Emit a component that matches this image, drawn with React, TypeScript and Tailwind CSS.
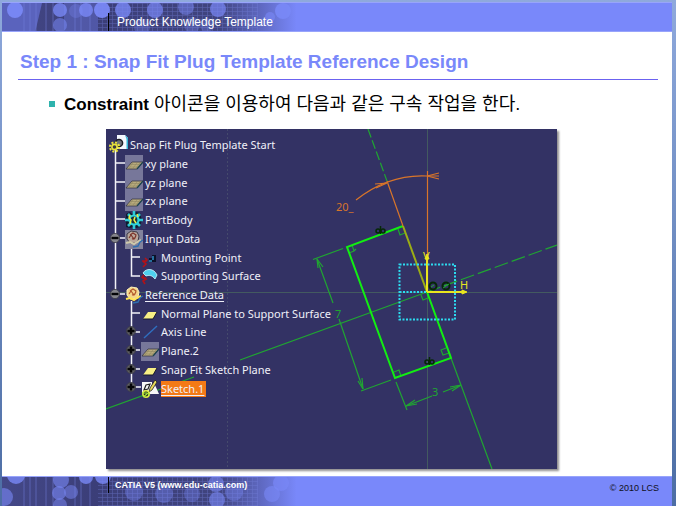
import React from "react";

type IconName =
  | "part"
  | "planeHidden"
  | "body"
  | "setHidden"
  | "point"
  | "surface"
  | "set"
  | "plane"
  | "line"
  | "sketch";

interface TreeNode {
  label: string;
  icon: IconName;
  level: 0 | 1 | 2;
  underlined?: boolean;
  selected?: boolean;
}

const nodes: TreeNode[] = [
  { label: "Snap Fit Plug Template Start", icon: "part", level: 0 },
  { label: "xy plane", icon: "planeHidden", level: 1 },
  { label: "yz plane", icon: "planeHidden", level: 1 },
  { label: "zx plane", icon: "planeHidden", level: 1 },
  { label: "PartBody", icon: "body", level: 1 },
  { label: "Input Data", icon: "setHidden", level: 1 },
  { label: "Mounting Point", icon: "point", level: 2 },
  { label: "Supporting Surface", icon: "surface", level: 2 },
  { label: "Reference Data", icon: "set", level: 1, underlined: true },
  { label: "Normal Plane to Support Surface", icon: "plane", level: 2 },
  { label: "Axis Line", icon: "line", level: 2 },
  { label: "Plane.2", icon: "planeHidden", level: 2 },
  { label: "Snap Fit Sketch Plane", icon: "plane", level: 2 },
  { label: "Sketch.1", icon: "sketch", level: 2, underlined: true, selected: true },
];

const indent = { 0: "pl-1", 1: "pl-[19px]", 2: "pl-[35px]" };

function Gear({ x, y, r, color, hole }: { x: number; y: number; r: number; color: string; hole: string }) {
  return (
    <g>
      <circle cx={x} cy={y} r={r} fill="none" stroke={color} strokeWidth="2" strokeDasharray="2 1.6" />
      <circle cx={x} cy={y} r={r - 2} fill={hole} stroke={color} strokeWidth="1.6" />
    </g>
  );
}

function NodeIcon({ name }: { name: IconName }) {
  return (
    <svg viewBox="0 0 18 18" className="size-[18px] shrink-0 overflow-visible" aria-hidden="true">
      {name === "part" && (
        <>
          <path d="M7 -1h8l3 3v11H7z" fill="#f4f8ff" />
          <path d="M15 -1l3 3v11h-1.500V3z" fill="#35b5d8" />
          <circle cx="9" cy="7" r="3.600" fill="#6a6f78" stroke="#1d1d26" strokeWidth="1.500" />
          <Gear x={4.5} y={11} r={4.6} color="#e9e23c" hole="#3a3a40" />
        </>
      )}
      {name === "planeHidden" && (
        <>
          <rect width="18" height="19" fill="#77779a" />
          <path d="M1 14L7 7h11l-6 7z" fill="#b9ab7d" stroke="#393744" strokeWidth="0.8" />
          <path d="M4 13l4-5m0 5l4-5m-1 5l4-5M3 12h10M5 9.500h10" stroke="#8f8662" strokeWidth="0.6" />
          <path d="M12 14l6-7" stroke="#1e4450" strokeWidth="1.2" />
        </>
      )}
      {name === "body" && (
        <>
          <path d="M1 3l4-2 2 2 4-2 4 1 1 4 1 3-1 3-1 4-4 1-3-1-3 1-4-1 0-4-1-3 1-3z" fill="#0f1c30" />
          <path d="M3 3l3 3M9 0v4M15 3l-3 3M18 9h-4M15 15l-3-3M9 18v-4M3 15l3-3M0 9h4" stroke="#2fc9d8" strokeWidth="2.600" />
          <circle cx="9" cy="9" r="4.500" fill="#18333c" stroke="#2fd3dc" strokeWidth="2.200" />
          <path d="M5 4l-1 3 2 2-1 4M10 6l-1 3 2 3M12 3l1 3" fill="none" stroke="#e8ef47" strokeWidth="1.500" />
        </>
      )}
      {(name === "setHidden" || name === "set") && (
        <>
          {name === "setHidden" && <rect width="18" height="19" fill="#83839c" />}
          <path
            d="M2 4l4-3 6 1 2 4-1 5-3 2H5L2 9z"
            fill={name === "set" ? "#f3d68a" : "#b9a79b"}
            stroke={name === "set" ? "#fff1b8" : "#403b47"}
          />
          <path d="M5 5l3-2 3 2-1 3-3 1M4 8l2-3 3 4 2-3" fill="none" stroke={name === "set" ? "#b0552a" : "#7c3328"} strokeWidth="1.1" />
          <path d="M1 13l4-1 4 2 3-2 4-2" fill="none" stroke={name === "set" ? "#ffe554" : "#cfc9ab"} strokeWidth="2" />
          <path d="M8 17l5-1 2-4 3-2" fill="none" stroke="#2f6fb0" strokeWidth="1.5" />
        </>
      )}
      {name === "point" && (
        <>
          <path d="M8 11h5V6" fill="none" stroke="#0b1128" strokeWidth="4" />
          <path d="M8 12h3M12 7v4" fill="none" stroke="#2f8fc4" strokeWidth="1.500" />
          <path d="M4 9l2 2-3 2 2 2-3 3M1 12h5" fill="none" stroke="#b31218" strokeWidth="1.600" />
        </>
      )}
      {name === "surface" && (
        <>
          <path d="M2 6c3-5 11-5 14 2l-2 4C11 8 8 8 5 9z" fill="#4fd0ee" stroke="#d4f7ff" strokeWidth="0.8" />
          <path d="M3 8l-2 2 4 2-3 2 2 3M1 11h4" fill="none" stroke="#b31218" strokeWidth="1.6" />
        </>
      )}
      {name === "plane" && (
        <>
          <path d="M2 14L7 7h9l-4 7z" fill="#f7ef85" />
          <path d="M2 14h10l4-7" fill="none" stroke="#15172c" />
        </>
      )}
      {name === "line" && <path d="M3 15L16 3" stroke="#2f6fc0" strokeWidth="1.4" />}
      {name === "sketch" && (
        <>
          <path d="M1 2h10v3h3l4 9H1z" fill="#f7f7f7" />
          <path d="M3 10l2-5 4-1-2 5z" fill="none" stroke="#222" strokeWidth="1.2" />
          <path d="M14 0L9 8l-1 4 3-2 5-8z" fill="#e6d95a" stroke="#222" strokeWidth="0.8" />
          <circle cx="5" cy="14" r="3.200" fill="#25301d" stroke="#dbe941" strokeWidth="1.600" />
          <path d="M1 13h5l3 2M2 17l4-3" stroke="#a8ea3d" strokeWidth="1.200" fill="none" />
        </>
      )}
    </svg>
  );
}

function Toggle({ x, y, plus }: { x: number; y: number; plus?: boolean }) {
  return (
    <g>
      <circle cx={x} cy={y} r="4.6" fill={plus ? "#5c5c63" : "#85858c"} stroke="#3c3c46" strokeWidth="0.8" />
      <path d={`M${x - 3.5} ${y}h7`} stroke="#050508" strokeWidth="2.4" />
      {plus && <path d={`M${x} ${y - 3.5}v7`} stroke="#050508" strokeWidth="2.4" />}
    </g>
  );
}

function Drawing() {
  return (
    <svg viewBox="106 129 451 340" className="absolute inset-0 size-full" aria-hidden="true" fill="none">
      <path d="M427.5 129v340M106 292.5h451" stroke="#435a60" />
      <path d="M227.5 129v340" stroke="#454a6c" strokeDasharray="2 2" />

      <g stroke="#20a532" strokeWidth="1.2">
        <path d="M368 129L387 181" strokeDasharray="9 3" />
        <path d="M427 292L557 245" strokeDasharray="14 4" />
        <path d="M427 292L240 360M194 377L106 409M451 358L492 469" />
        <path d="M313 259.500L343 248.500M317 259L333 303M339 319L363 389M361 391L391 380" />
        <path d="M396 382L407 410M406 406L432 396M443 392L461 385" />
        <path d="M317 259l1 9M317 259l6 8M363 389l-5-8M363 389l-1-11M406 406l9-6M406 406l11-2M461 385l-11 2M461 385l-9 6" />
        <path d="M349 253l5-2 2-2M354 251l-2-6M349 253l1 0M398 229l2 6 5-2M394 372l5-2 2 6M449 353l-6 2-2-5 5-2M421 295l2 5 5-2" />
      </g>
      <path d="M403 226L347 247L395 378L451 358L427 292" stroke="#12ee12" strokeWidth="2" />
      <path d="M403 226L427 292" stroke="#9cae15" strokeWidth="2" />

      <g stroke="#d8752a" strokeWidth="1.2">
        <path d="M387 181L403 226M427.500 171V292" />
        <path d="M356 200Q389 174 427 176H439" />
        <path d="M387 183l-12 1M387 183l-11 5M427 176l12-3M427 176l12 3" />
      </g>
      <text x="336" y="211" fill="#d8752a" className="font-['Noto_Sans'] text-[11px]">20_</text>

      <g stroke="#e9e51e" strokeWidth="2">
        <path d="M427 292V257M427 292H466" />
        <path d="M425 259l2-5 2 5zM462 290l5 2-5 2z" fill="#e9e51e" strokeWidth="1" />
      </g>
      <text x="423" y="260" fill="#e9e51e" className="font-['Noto_Sans'] text-[11px]">V</text>
      <text x="460" y="289" fill="#e9e51e" className="font-['Noto_Sans'] text-[11px]">H</text>

      <path d="M399.500 264.500H455V319.500H399.500ZM399.500 292H427" stroke="#2cdcf0" strokeWidth="2" strokeDasharray="2 1.500" />

      <g stroke="#062806" strokeWidth="2">
        <circle cx="433" cy="286" r="3.500" />
        <circle cx="446" cy="286" r="3.500" />
      </g>
      <path d="M443 288l6-4M431 287l3-2" stroke="#20a532" />
      <g stroke="#062806" strokeWidth="1.500">
        <circle cx="378" cy="231" r="2" />
        <path d="M380.500 226v8" />
        <circle cx="383" cy="231" r="2" />
        <circle cx="427" cy="362" r="2" />
        <path d="M429.500 357v8" />
        <circle cx="432" cy="362" r="2" />
      </g>
      <text x="335" y="318" fill="#20a532" className="font-['Noto_Sans'] text-[11px]">7</text>
      <text x="432" y="396" fill="#20a532" className="font-['Noto_Sans'] text-[11px]">3</text>

      <g stroke="#f2f2f8" strokeWidth="1.500">
        <path d="M115.500 150V294M115.500 163H125M115.500 182H125M115.500 201H125M115.500 219H125M115.500 238H125M115.500 294H125" />
        <path d="M131.500 246V276H140M131.500 257H140M131.500 301V387M131.500 313H140M131.500 332H140M131.500 350H140M131.500 369H140M131.500 387H141" />
      </g>
      <Toggle x={115} y={238} />
      <Toggle x={115} y={294} />
      <Toggle x={131} y={331} plus />
      <Toggle x={131} y={350} plus />
      <Toggle x={131} y={369} plus />
      <Toggle x={131} y={387} plus />
    </svg>
  );
}

const topDots = [
  [13, 7, 8, 0.95], [58, 7, 7, 0.8], [58, 22, 7, 0.55], [74, 8, 7, 0.3], [84, 7, 7, 0.8], [100, 7, 8, 0.95], [121, 7, 8, 0.8],
  [153, 7, 8, 0.7], [184, 4, 8, 0.5], [216, 6, 8, 0.7], [140, 24, 8, 0.3], [190, 22, 8, 0.3], [205, 22, 7, 0.3], [281, 8, 8, 0.9], [268, 14, 5, 0.6],
];

const bottomDots = [
  [14, -2, 9, 0.8], [2, 20, 9, 0.6], [59, 3, 8, 0.6], [57, 16, 7, 0.6], [58, 28, 7, 0.5], [69, 15, 7, 0.5], [84, 0, 7, 0.8], [101, -1, 8, 0.8],
  [132, 15, 9, 0.4], [162, 17, 9, 0.4], [190, 17, 8, 0.35], [214, 7, 8, 0.6], [215, 23, 8, 0.6], [232, 15, 9, 0.4], [279, 6, 8, 0.7], [270, 17, 8, 0.6],
];

function BannerArt({ id, flipped }: { id: string; flipped?: boolean }) {
  const dots = flipped ? bottomDots : topDots;
  return (
    <svg
      viewBox="0 0 310 29"
      preserveAspectRatio="xMinYMin slice"
      className="absolute left-0 top-0 h-full w-[310px]"
      aria-hidden="true"
    >
      <defs>
        <linearGradient id={`${id}-fade`}>
          <stop offset="0" stopColor="#444888" />
          <stop offset="0.3" stopColor="#3b3e78" />
          <stop offset="0.7" stopColor="#40447f" />
          <stop offset="0.95" stopColor="#7988fa" />
        </linearGradient>
        <pattern id={`${id}-grid`} width="5" height="4" patternUnits="userSpaceOnUse">
          <path d="M0 .5h5M.5 0v4" stroke="#7581dd" strokeWidth="0.6" />
        </pattern>
      </defs>
      <rect width="310" height="30" fill={`url(#${id}-fade)`} />
      {!flipped && <path d="M0 0h40l-7 30H0z" fill="#5a63bd" />}
      {!flipped && <path d="M62 0h34v30H62z" fill="#5f69c4" opacity="0.6" />}
      <rect x="96" width="160" height="30" fill={`url(#${id}-grid)`} opacity="0.5" />
      <path d="M22 0v30M28 0v30M34 0v30M44 0v30M51 0v30M73 0v30M79 0v30M88 0v30" stroke="#7480df" opacity="0.5" />
      {dots.map(([x, y, r, opacity]) => (
        <circle key={`${x}-${y}`} cx={x} cy={y} r={r} fill="#7988f6" opacity={opacity} />
      ))}
    </svg>
  );
}

export default function App() {
  return (
    <div className="min-h-screen bg-linear-to-b from-[#8fa9dc] to-[#4c6da4] pl-0.5 pr-1 pt-0.5 font-['Liberation_Sans','Noto_Sans_CJK_KR',sans-serif]">
      <div className="flex min-h-[504px] flex-col bg-white">
        <header className="relative flex h-[30px] items-end border-y border-[#98a4fb] bg-[#7988fa]">
          <BannerArt id="top" />
          <div className="relative ml-[106px] flex h-[18px] items-center border-l border-black pl-2 text-[12px] leading-4 text-white">
            Product Knowledge Template
          </div>
        </header>

        <main className="flex-1 px-4 pr-[14px]">
          <h1 className="mt-[18px] border-b border-[#6b62f0] pb-[5px] pl-0.5 text-[19px] font-bold leading-6 text-[#7988fa]">
            Step 1 : Snap Fit Plug Template Reference Design
          </h1>
          <ul className="mt-3 pl-[31px]">
            <li className="flex h-6 items-center gap-[9px] whitespace-nowrap text-[18px] leading-6 text-black">
              <span className="size-1.5 shrink-0 bg-[#2fb3ad]" />
              <span>
                <strong className="text-[17px]">Constraint</strong> 아이콘을 이용하여 다음과 같은 구속 작업을 한다.
              </span>
            </li>
          </ul>

          <figure className="relative ml-[88px] mt-[13px] h-[340px] w-[451px] bg-[#333264] pt-[7px] shadow-[2px_2px_2px_#918f90]">
            <Drawing />
            <ul className="relative grid h-[262px] auto-rows-fr font-['Noto_Sans'] text-[11px] leading-4 text-[#f0f0f8]">
              {nodes.map((node) => (
                <li key={node.label} className={`flex items-center gap-0.5 ${indent[node.level]}`}>
                  <NodeIcon name={node.icon} />
                  <span
                    className={`${node.underlined ? "underline underline-offset-2" : ""} ${
                      node.selected ? "bg-[#f47a16] pr-0.5" : ""
                    }`}
                  >
                    {node.label}
                  </span>
                </li>
              ))}
            </ul>
          </figure>
        </main>

        <footer className="relative flex h-[30px] items-start justify-between border-t border-[#98a4fb] bg-[#7988fa]">
          <BannerArt id="bottom" flipped />
          <div className="relative ml-[106px] flex h-4 items-center border-l border-black pl-1.5 text-[9px] font-bold leading-4 text-white">
            CATIA V5 (www.edu-catia.com)
          </div>
          <div className="relative mr-[13px] mt-[3px] text-[9px] leading-4 text-[#101020]">© 2010 LCS</div>
        </footer>
      </div>
    </div>
  );
}
